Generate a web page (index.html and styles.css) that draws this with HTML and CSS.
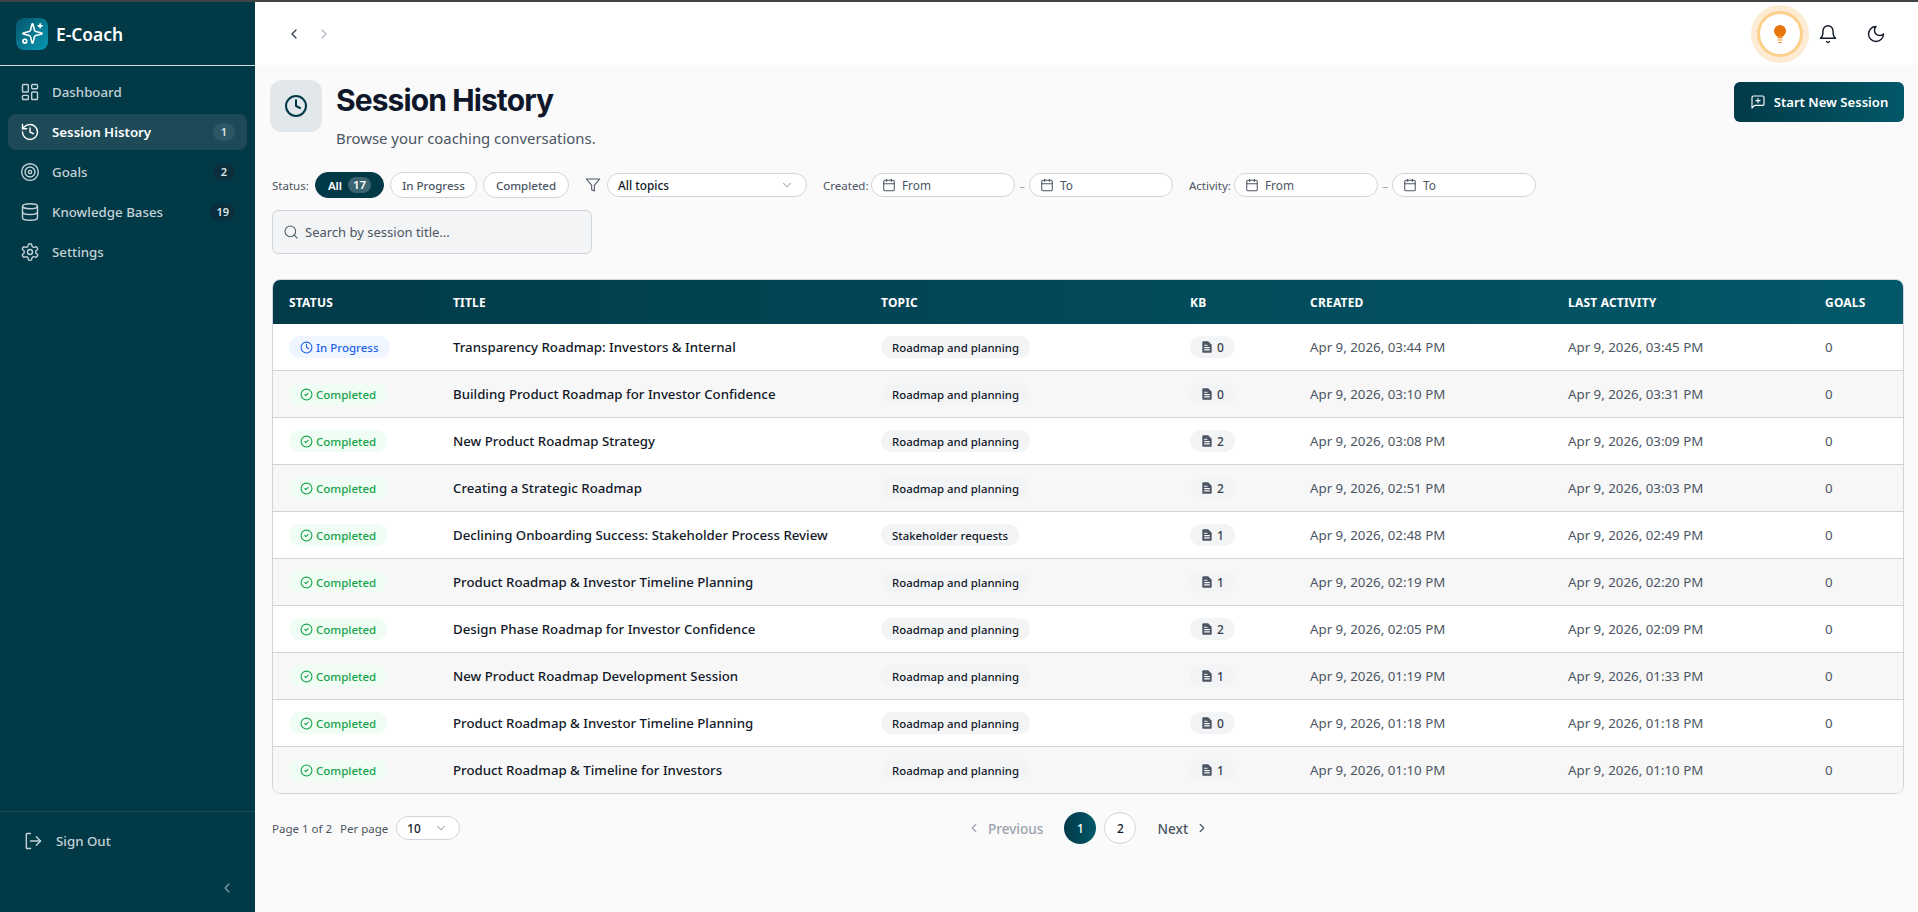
FILE: index.html
```html
<!DOCTYPE html>
<html lang="en">
<head>
<meta charset="utf-8">
<title>Session History - E-Coach</title>
<link rel="stylesheet" href="styles.css">
</head>
<body>
<svg class="defs" aria-hidden="true">
  <symbol id="i-clock" viewBox="0 0 24 24"><circle cx="12" cy="12" r="10"/><path d="M12 6v6l4 2"/></symbol>
  <symbol id="i-check" viewBox="0 0 24 24"><circle cx="12" cy="12" r="10"/><path d="m9 12 2 2 4-4"/></symbol>
  <symbol id="i-cal" viewBox="0 0 24 24"><rect x="3" y="4" width="18" height="18" rx="2"/><path d="M16 2v4M8 2v4M3 10h18"/></symbol>
  <symbol id="i-down" viewBox="0 0 24 24"><path d="m6 9 6 6 6-6"/></symbol>
  <symbol id="i-left" viewBox="0 0 24 24"><path d="m15 18-6-6 6-6"/></symbol>
  <symbol id="i-right" viewBox="0 0 24 24"><path d="m9 18 6-6-6-6"/></symbol>
  <symbol id="i-doc" viewBox="0 0 24 24"><path class="doc-body" d="M6 2h8l6 6v12a2 2 0 0 1-2 2H6a2 2 0 0 1-2-2V4a2 2 0 0 1 2-2z"/><path class="doc-lines" d="M8 9h4M8 13h8M8 17h8"/></symbol>
  <symbol id="i-bell" viewBox="0 0 24 24"><path d="M6 8a6 6 0 0 1 12 0c0 7 3 9 3 9H3s3-2 3-9"/><path d="M10.300 21a1.940 1.940 0 0 0 3.400 0"/></symbol>
</svg>
<div class="topline"></div>
<div class="app">
  <aside class="sidebar">
    <div class="brand">
      <span class="logo">
        <svg class="ico logo-ico" viewBox="0 0 24 24"><path d="M9.937 15.500A2 2 0 0 0 8.500 14.063l-6.135-1.582a.5.5 0 0 1 0-.962L8.500 9.936A2 2 0 0 0 9.937 8.500l1.582-6.135a.5.5 0 0 1 .963 0L14.063 8.500A2 2 0 0 0 15.500 9.937l6.135 1.581a.5.5 0 0 1 0 .964L15.500 14.063a2 2 0 0 0-1.437 1.437l-1.582 6.135a.5.5 0 0 1-.963 0z"/><path d="M20 2v4M22 4h-4"/><circle cx="4" cy="20" r="2"/></svg>
      </span>
      <span class="brand-name">E-Coach</span>
    </div>
    <nav class="nav">
      <a class="nav-item"><svg class="ico nav-ico" viewBox="0 0 24 24"><rect x="3" y="3" width="7" height="9" rx="1"/><rect x="14" y="3" width="7" height="5" rx="1"/><rect x="14" y="12" width="7" height="9" rx="1"/><rect x="3" y="16" width="7" height="5" rx="1"/></svg><span class="nav-label">Dashboard</span></a>
      <a class="nav-item active"><svg class="ico nav-ico" viewBox="0 0 24 24"><path d="M3 12a9 9 0 1 0 9-9 9.750 9.750 0 0 0-6.740 2.740L3 8"/><path d="M3 3v5h5"/><path d="M12 7v5l4 2"/></svg><span class="nav-label">Session History</span><span class="badge">1</span></a>
      <a class="nav-item"><svg class="ico nav-ico" viewBox="0 0 24 24"><circle cx="12" cy="12" r="10"/><circle cx="12" cy="12" r="6"/><circle cx="12" cy="12" r="2"/></svg><span class="nav-label">Goals</span><span class="badge">2</span></a>
      <a class="nav-item"><svg class="ico nav-ico" viewBox="0 0 24 24"><ellipse cx="12" cy="5" rx="9" ry="3"/><path d="M3 5v14a9 3 0 0 0 18 0V5"/><path d="M3 12a9 3 0 0 0 18 0"/></svg><span class="nav-label">Knowledge Bases</span><span class="badge">19</span></a>
      <a class="nav-item"><svg class="ico nav-ico" viewBox="0 0 24 24"><path d="M12.220 2h-.44a2 2 0 0 0-2 2v.18a2 2 0 0 1-1 1.730l-.43.25a2 2 0 0 1-2 0l-.15-.08a2 2 0 0 0-2.730.73l-.22.38a2 2 0 0 0 .73 2.730l.15.1a2 2 0 0 1 1 1.720v.51a2 2 0 0 1-1 1.740l-.15.09a2 2 0 0 0-.73 2.730l.22.38a2 2 0 0 0 2.730.73l.15-.08a2 2 0 0 1 2 0l.43.25a2 2 0 0 1 1 1.730V20a2 2 0 0 0 2 2h.44a2 2 0 0 0 2-2v-.18a2 2 0 0 1 1-1.730l.43-.25a2 2 0 0 1 2 0l.15.08a2 2 0 0 0 2.730-.73l.22-.39a2 2 0 0 0-.73-2.730l-.15-.08a2 2 0 0 1-1-1.740v-.5a2 2 0 0 1 1-1.740l.15-.09a2 2 0 0 0 .73-2.730l-.22-.38a2 2 0 0 0-2.730-.73l-.15.08a2 2 0 0 1-2 0l-.43-.25a2 2 0 0 1-1-1.730V4a2 2 0 0 0-2-2z"/><circle cx="12" cy="12" r="3"/></svg><span class="nav-label">Settings</span></a>
    </nav>
    <div class="side-foot">
      <a class="signout"><svg class="ico nav-ico" viewBox="0 0 24 24"><path d="M9 21H5a1 1 0 0 1-1-1V4a1 1 0 0 1 1-1h4"/><path d="m16 17 5-5-5-5"/><path d="M21 12H9"/></svg><span>Sign Out</span></a>
      <div class="collapse"><svg class="ico collapse-ico"><use href="#i-left"/></svg></div>
    </div>
  </aside>
  <div class="main">
    <header class="topbar">
      <div class="history-nav">
        <svg class="ico hn-ico"><use href="#i-left"/></svg>
        <svg class="ico hn-ico off"><use href="#i-right"/></svg>
      </div>
      <div class="top-actions">
        <span class="top-btn tip-btn">
          <svg class="bulb" viewBox="0 0 12 18"><circle cx="6" cy="6" r="6"/><path class="bulb-base" d="M3.200 11h5.600l-.5 2.200H3.700zM3.400 14.600h5.200v1H3.400zM4.300 17h3.400v1H4.300z"/></svg>
        </span>
        <span class="top-btn"><svg class="ico top-ico"><use href="#i-bell"/></svg></span>
        <span class="top-btn"><svg class="ico top-ico" viewBox="0 0 24 24"><path d="M12 3a6 6 0 0 0 9 9 9 9 0 1 1-9-9Z"/></svg></span>
      </div>
    </header>
    <main class="content">
      <div class="page-head">
        <span class="head-icon"><svg class="ico head-ico"><use href="#i-clock"/></svg></span>
        <div class="head-text">
          <h1>Session History</h1>
          <p>Browse your coaching conversations.</p>
        </div>
        <button class="primary"><svg class="ico btn-ico" viewBox="0 0 24 24"><path d="M21 15a2 2 0 0 1-2 2H7l-4 4V5a2 2 0 0 1 2-2h14a2 2 0 0 1 2 2z"/><path d="M12 7v6M9 10h6"/></svg>Start New Session</button>
      </div>
      <div class="filters">
        <span class="flabel status">Status:</span>
        <span class="pill on">All <b class="count">17</b></span>
        <span class="pill ip">In Progress</span>
        <span class="pill cp">Completed</span>
        <svg class="ico funnel" viewBox="0 0 24 24"><path d="M22 3H2l8 9.460V19l4 2v-8.540z"/></svg>
        <span class="select topics"><span>All topics</span><svg class="ico sel-ico"><use href="#i-down"/></svg></span>
        <span class="flabel created">Created:</span>
        <span class="date"><svg class="ico cal"><use href="#i-cal"/></svg>From</span>
        <span class="dash">–</span>
        <span class="date"><svg class="ico cal"><use href="#i-cal"/></svg>To</span>
        <span class="flabel activity">Activity:</span>
        <span class="date"><svg class="ico cal"><use href="#i-cal"/></svg>From</span>
        <span class="dash">–</span>
        <span class="date"><svg class="ico cal"><use href="#i-cal"/></svg>To</span>
      </div>
      <div class="search"><svg class="ico search-ico" viewBox="0 0 24 24"><circle cx="11" cy="11" r="8"/><path d="m21 21-4.300-4.300"/></svg><span>Search by session title...</span></div>
      <div class="table-wrap">
        <table>
          <colgroup><col class="c1"><col class="c2"><col class="c3"><col class="c4"><col class="c5"><col class="c6"><col class="c7"></colgroup>
          <thead><tr><th>Status</th><th>Title</th><th>Topic</th><th>KB</th><th>Created</th><th>Last Activity</th><th>Goals</th></tr></thead>
          <tbody>
            <tr><td><span class="st prog"><svg class="ico st-ico"><use href="#i-clock"/></svg>In Progress</span></td><td class="title">Transparency Roadmap: Investors &amp; Internal</td><td><span class="tag">Roadmap and planning</span></td><td><span class="kb"><svg class="ico kb-ico"><use href="#i-doc"/></svg>0</span></td><td>Apr 9, 2026, 03:44 PM</td><td>Apr 9, 2026, 03:45 PM</td><td>0</td></tr>
            <tr><td><span class="st done"><svg class="ico st-ico"><use href="#i-check"/></svg>Completed</span></td><td class="title">Building Product Roadmap for Investor Confidence</td><td><span class="tag">Roadmap and planning</span></td><td><span class="kb"><svg class="ico kb-ico"><use href="#i-doc"/></svg>0</span></td><td>Apr 9, 2026, 03:10 PM</td><td>Apr 9, 2026, 03:31 PM</td><td>0</td></tr>
            <tr><td><span class="st done"><svg class="ico st-ico"><use href="#i-check"/></svg>Completed</span></td><td class="title">New Product Roadmap Strategy</td><td><span class="tag">Roadmap and planning</span></td><td><span class="kb"><svg class="ico kb-ico"><use href="#i-doc"/></svg>2</span></td><td>Apr 9, 2026, 03:08 PM</td><td>Apr 9, 2026, 03:09 PM</td><td>0</td></tr>
            <tr><td><span class="st done"><svg class="ico st-ico"><use href="#i-check"/></svg>Completed</span></td><td class="title">Creating a Strategic Roadmap</td><td><span class="tag">Roadmap and planning</span></td><td><span class="kb"><svg class="ico kb-ico"><use href="#i-doc"/></svg>2</span></td><td>Apr 9, 2026, 02:51 PM</td><td>Apr 9, 2026, 03:03 PM</td><td>0</td></tr>
            <tr><td><span class="st done"><svg class="ico st-ico"><use href="#i-check"/></svg>Completed</span></td><td class="title">Declining Onboarding Success: Stakeholder Process Review</td><td><span class="tag">Stakeholder requests</span></td><td><span class="kb"><svg class="ico kb-ico"><use href="#i-doc"/></svg>1</span></td><td>Apr 9, 2026, 02:48 PM</td><td>Apr 9, 2026, 02:49 PM</td><td>0</td></tr>
            <tr><td><span class="st done"><svg class="ico st-ico"><use href="#i-check"/></svg>Completed</span></td><td class="title">Product Roadmap &amp; Investor Timeline Planning</td><td><span class="tag">Roadmap and planning</span></td><td><span class="kb"><svg class="ico kb-ico"><use href="#i-doc"/></svg>1</span></td><td>Apr 9, 2026, 02:19 PM</td><td>Apr 9, 2026, 02:20 PM</td><td>0</td></tr>
            <tr><td><span class="st done"><svg class="ico st-ico"><use href="#i-check"/></svg>Completed</span></td><td class="title">Design Phase Roadmap for Investor Confidence</td><td><span class="tag">Roadmap and planning</span></td><td><span class="kb"><svg class="ico kb-ico"><use href="#i-doc"/></svg>2</span></td><td>Apr 9, 2026, 02:05 PM</td><td>Apr 9, 2026, 02:09 PM</td><td>0</td></tr>
            <tr><td><span class="st done"><svg class="ico st-ico"><use href="#i-check"/></svg>Completed</span></td><td class="title">New Product Roadmap Development Session</td><td><span class="tag">Roadmap and planning</span></td><td><span class="kb"><svg class="ico kb-ico"><use href="#i-doc"/></svg>1</span></td><td>Apr 9, 2026, 01:19 PM</td><td>Apr 9, 2026, 01:33 PM</td><td>0</td></tr>
            <tr><td><span class="st done"><svg class="ico st-ico"><use href="#i-check"/></svg>Completed</span></td><td class="title">Product Roadmap &amp; Investor Timeline Planning</td><td><span class="tag">Roadmap and planning</span></td><td><span class="kb"><svg class="ico kb-ico"><use href="#i-doc"/></svg>0</span></td><td>Apr 9, 2026, 01:18 PM</td><td>Apr 9, 2026, 01:18 PM</td><td>0</td></tr>
            <tr><td><span class="st done"><svg class="ico st-ico"><use href="#i-check"/></svg>Completed</span></td><td class="title">Product Roadmap &amp; Timeline for Investors</td><td><span class="tag">Roadmap and planning</span></td><td><span class="kb"><svg class="ico kb-ico"><use href="#i-doc"/></svg>1</span></td><td>Apr 9, 2026, 01:10 PM</td><td>Apr 9, 2026, 01:10 PM</td><td>0</td></tr>
          </tbody>
        </table>
      </div>
      <div class="pager">
        <div class="pager-left">
          <span>Page 1 of 2</span>
          <span>Per page</span>
          <span class="select perpage"><span>10</span><svg class="ico sel-ico"><use href="#i-down"/></svg></span>
        </div>
        <div class="pager-mid">
          <span class="pg-link off"><svg class="ico pg-ico"><use href="#i-left"/></svg>Previous</span>
          <span class="pg-num cur">1</span>
          <span class="pg-num">2</span>
          <span class="pg-link">Next<svg class="ico pg-ico"><use href="#i-right"/></svg></span>
        </div>
        <div></div>
      </div>
    </main>
  </div>
</div>
</body>
</html>
```
FILE: styles.css
```css
* { box-sizing: border-box; }
html, body { margin: 0; height: 100%; }
body {
  overflow: hidden;
  display: flex;
  flex-direction: column;
  background: #fafafa;
  color: #111827;
  font-family: "Noto Sans", "Liberation Sans", sans-serif;
  font-size: 13.3px;
}
.defs { position: absolute; width: 0; height: 0; }
.ico { fill: none; stroke: currentColor; stroke-width: 2; stroke-linecap: round; stroke-linejoin: round; flex: none; }
.topline { height: 2px; background: #3f4446; flex: none; }
.app { flex: 1; display: flex; min-height: 0; }

/* Sidebar */
.sidebar { width: 255px; flex: none; background: #023947; display: flex; flex-direction: column; color: #c3d2d7; }
.brand { height: 64px; flex: none; display: flex; align-items: center; gap: 8px; padding: 0 16px; border-bottom: 1px solid #cfd9dc; }
.logo { width: 32px; height: 32px; border-radius: 8px; background: linear-gradient(135deg, #05566b, #0898b4); display: flex; align-items: center; justify-content: center; color: #fff; }
.logo-ico { width: 23px; height: 23px; stroke-width: 1.7; }
.brand-name { color: #fff; font-size: 17.4px; font-weight: 600; }
.nav { display: flex; flex-direction: column; gap: 4px; padding: 8px; }
.nav-item { height: 36px; display: flex; align-items: center; gap: 12px; padding: 0 12px; border-radius: 8px; font-size: 13.3px; font-weight: 500; }
.nav-item.active { background: #1e4a58; color: #fff; font-weight: 600; }
.nav-ico { width: 20px; height: 20px; stroke-width: 1.7; }
.nav-label { flex: 1; }
.badge { min-width: 22px; height: 18px; padding: 0 6px; border-radius: 9px; background: #0a2e3c; color: #dce6e9; font-size: 11px; font-weight: 600; line-height: 18px; text-align: center; }
.active .badge { background: #2e5765; }
.side-foot { margin-top: auto; border-top: 1px solid #1a4c5a; }
.signout { display: flex; align-items: center; gap: 13px; padding: 0 23px; height: 57px; font-size: 13.3px; font-weight: 500; }
.collapse { display: flex; justify-content: flex-end; padding: 11px 20px 16px; }
.collapse-ico { width: 16px; height: 16px; color: #8ea5ac; stroke-width: 1.6; }

/* Top bar */
.main { flex: 1; min-width: 0; display: flex; flex-direction: column; }
.topbar { height: 63px; flex: none; background: #fff; display: flex; align-items: center; justify-content: space-between; padding: 0 22px 0 31px; }
.history-nav { display: flex; gap: 14px; color: #374151; }
.hn-ico { width: 16px; height: 16px; }
.hn-ico.off { color: #b6bcc5; }
.top-actions { display: flex; align-items: center; gap: 8px; }
.top-btn { width: 40px; height: 40px; border-radius: 50%; display: flex; align-items: center; justify-content: center; }
.tip-btn { background: #fff; box-shadow: 0 0 0 3px #fccf8b, 0 0 0 9px #fdecd3; }
.bulb { width: 12px; height: 18px; fill: #e8740c; }
.bulb-base { fill: #ef8a2a; }
.top-ico { width: 20px; height: 20px; color: #111827; stroke-width: 1.7; }

/* Content */
.content { flex: 1; padding: 15px 14px 0 17px; min-height: 0; display: flex; flex-direction: column; }
.page-head { display: flex; align-items: flex-start; margin-left: -2px; height: 92px; flex: none; }
.head-icon { width: 52px; height: 52px; border-radius: 12px; background: #e1e7ea; display: flex; align-items: center; justify-content: center; color: #023947; flex: none; }
.head-ico { width: 24px; height: 24px; }
.head-text { margin-left: 14px; flex: 1; }
h1 { margin: 0; font-family: "Inter", "Liberation Sans", sans-serif; font-size: 30px; font-weight: 700; line-height: 40px; letter-spacing: -0.9px; color: #0f172a; }
.head-text p { margin: 7px 0 0; font-size: 14.9px; line-height: 22px; color: #4b5563; }
.primary { margin-top: 2px; width: 170px; height: 40px; border: 0; border-radius: 6px; background: linear-gradient(90deg, #023a48, #025869); color: #fff; display: flex; align-items: center; justify-content: center; gap: 8px; font: 600 13.1px "Noto Sans", sans-serif; }
.btn-ico { width: 16px; height: 16px; stroke-width: 1.7; }

.filters { display: flex; align-items: center; height: 26px; flex: none; font-size: 11.5px; color: #4b5563; }
.flabel { font-size: 11.5px; color: #4b5563; }
.status { width: 35px; }
.pill { height: 26px; border-radius: 13px; border: 1px solid #d1d5db; background: #fff; display: flex; align-items: center; justify-content: center; font-weight: 500; font-size: 11.5px; color: #4b5563; }
.pill.on { width: 69px; margin-left: 8px; background: #023947; border-color: #023947; color: #fff; font-weight: 600; gap: 6px; }
.pill.ip { width: 87px; margin-left: 6px; }
.pill.cp { width: 86px; margin-left: 6px; }
.count { min-width: 23px; height: 16px; border-radius: 8px; background: #3b6470; line-height: 16px; text-align: center; font-size: 11.5px; font-weight: 600; }
.funnel { width: 16px; height: 16px; margin-left: 16px; color: #4b5563; stroke-width: 1.6; }
.select { height: 24px; border: 1px solid #d1d5db; border-radius: 12px; background: #fff; display: flex; align-items: center; justify-content: space-between; font-size: 11.8px; font-weight: 500; color: #111827; }
.topics { width: 200px; margin-left: 6px; padding: 0 12px 0 10px; }
.sel-ico { width: 14px; height: 14px; color: #9ca3af; stroke-width: 1.8; }
.created { margin-left: 16px; width: 48px; }
.activity { margin-left: 16px; width: 45px; }
.date { width: 144px; height: 24px; border: 1px solid #d1d5db; border-radius: 12px; background: #fff; display: flex; align-items: center; gap: 6px; padding-left: 10px; font-size: 11.8px; color: #4b5563; }
.cal { width: 14px; height: 14px; stroke-width: 1.8; color: #4b5563; }
.dash { width: 14px; text-align: center; color: #9ca3af; }
.search { margin-top: 12px; width: 320px; height: 44px; flex: none; border: 1px solid #d1d5db; border-radius: 6px; background: #f3f4f6; display: flex; align-items: center; gap: 6px; padding-left: 10px; font-size: 13px; color: #4b5563; }
.search-ico { width: 16px; height: 16px; stroke-width: 1.6; color: #4b5f68; }

/* Table */
.table-wrap { margin-top: 25px; border: 1px solid #d1d5db; border-radius: 8px; overflow: hidden; flex: none; background: #fff; }
table { width: 100%; border-collapse: separate; border-spacing: 0; table-layout: fixed; }
.c1 { width: 164px; } .c2 { width: 428px; } .c3 { width: 309px; } .c4 { width: 120px; } .c5 { width: 258px; } .c6 { width: 257px; } .c7 { width: 94px; }
thead tr { background: linear-gradient(90deg, #023a48, #025869); }
th { height: 44px; padding: 0 16px; text-align: left; color: #fff; font-size: 12px; font-weight: 700; text-transform: uppercase; letter-spacing: 0.2px; }
td { height: 47px; padding: 0 16px; font-size: 13.3px; color: #4b5563; border-bottom: 1px solid #d1d5db; white-space: nowrap; }
tbody tr:nth-child(even) { background: #f7f7f8; }
tbody tr:last-child td { border-bottom: 0; height: 46px; }
td.title { color: #111827; font-weight: 500; font-size: 13.25px; }
.st { display: inline-flex; align-items: center; gap: 3px; height: 22px; padding: 0 11px; border-radius: 11px; font-size: 11.5px; font-weight: 500; vertical-align: middle; }
.st.prog { background: #eff6ff; color: #2563eb; }
.st.done { background: #f0fdf4; color: #16a34a; }
.st-ico { width: 13px; height: 13px; stroke-width: 2; }
.tag { display: inline-flex; align-items: center; height: 22px; padding: 0 11px; border-radius: 11px; background: #f3f4f6; color: #111827; font-size: 11.4px; font-weight: 500; vertical-align: middle; }
.kb { display: inline-flex; align-items: center; gap: 3px; height: 22px; padding: 0 11px 0 10px; border-radius: 11px; background: #f3f4f6; color: #374151; font-size: 12px; font-weight: 500; vertical-align: middle; }
.kb-ico { width: 14px; height: 14px; stroke: none; }
.doc-body { fill: #4b5563; stroke: none; }
.doc-lines { stroke: #fff; stroke-width: 2; fill: none; }

/* Pager */
.pager { margin-top: 18px; display: grid; grid-template-columns: 1fr auto 1fr; align-items: center; height: 32px; flex: none; }
.pager-left { display: flex; align-items: center; gap: 8px; font-size: 11.5px; color: #4b5563; }
.perpage { width: 64px; padding: 0 11px 0 10px; }
.pager-mid { display: flex; align-items: center; gap: 8px; }
.pg-link { display: flex; align-items: center; gap: 7px; font-size: 13.6px; font-weight: 500; color: #4b5563; padding: 0 13px; }
.pg-link.off { color: #9ca3af; }
.pg-ico { width: 14px; height: 14px; }
.pg-num { width: 32px; height: 32px; border-radius: 50%; border: 1px solid #d1d5db; background: #fff; display: flex; align-items: center; justify-content: center; font-size: 12px; font-weight: 500; color: #111827; }
.pg-num.cur { background: linear-gradient(90deg, #023a48, #025869); border: 0; color: #fff; }
```
